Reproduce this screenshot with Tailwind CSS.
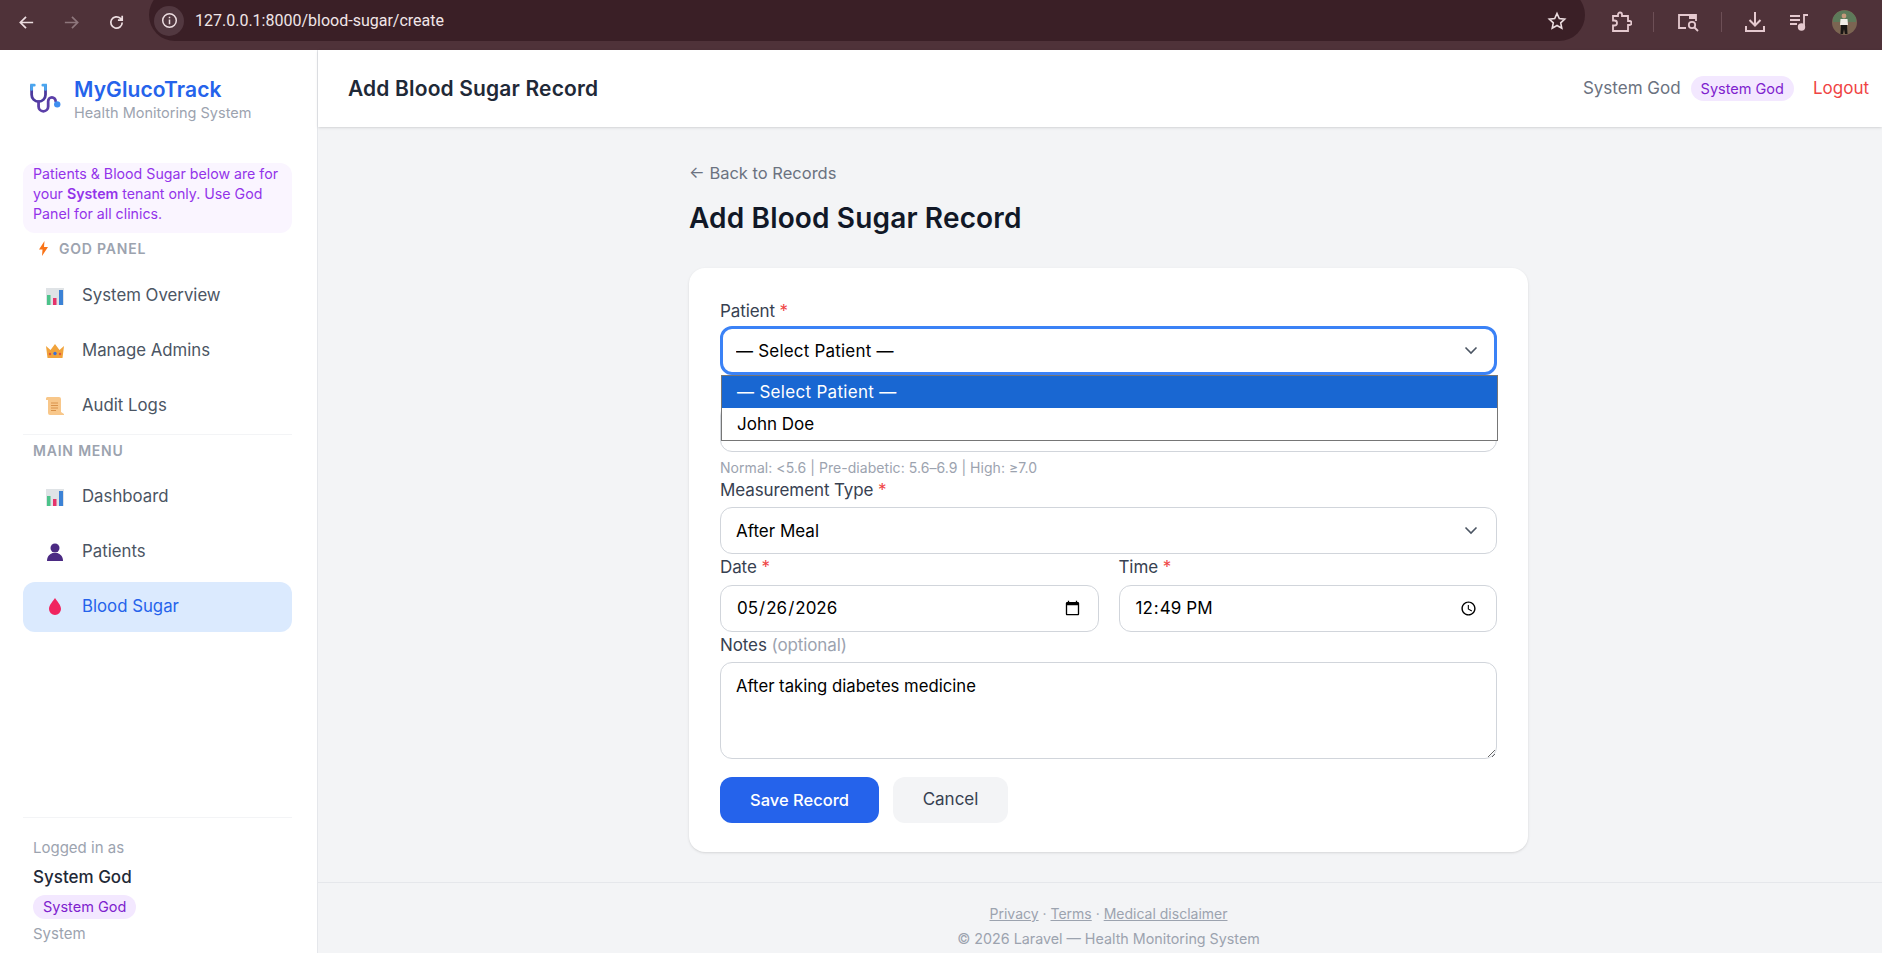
<!DOCTYPE html>
<html lang="en">
<head>
  <meta charset="UTF-8">
  <meta name="viewport" content="width=device-width, initial-scale=1.0">
  <title>Add Blood Sugar Record - MyGlucoTrack</title>
  <script src="https://cdn.jsdelivr.net/npm/@tailwindcss/browser@4"></script>
</head>
<body class="h-[953px] overflow-hidden bg-[#f3f4f6] font-[Inter,sans-serif] text-[#1f2937]">

  <!-- Browser chrome -->
  <div class="flex h-[50px] items-start overflow-hidden bg-[#4f3239] text-[#ecdde0]">
    <div class="flex h-[44px] w-[149px] shrink-0 items-center pl-[17px] gap-[26px]">
      <svg class="h-[19px] w-[19px]" viewBox="0 0 20 20" fill="none" stroke="currentColor" stroke-width="1.8"><path d="M17 10H3.500M9.500 4l-6 6 6 6"/></svg>
      <svg class="h-[19px] w-[19px] opacity-40" viewBox="0 0 20 20" fill="none" stroke="currentColor" stroke-width="1.8"><path d="M3 10h13.500M10.500 4l6 6-6 6"/></svg>
      <svg class="h-[19px] w-[19px]" viewBox="0 0 20 20" fill="none" stroke="currentColor" stroke-width="1.8"><path d="M16 10a6 6 0 1 1-1.800-4.300L16 7.500M16 3v4.500h-4.500"/></svg>
    </div>
    <div class="-mt-[11px] flex h-[52px] w-[1436px] shrink-0 items-center rounded-full bg-[#3a1f26] pt-[11px] pl-[5px]">
      <div class="flex h-[30px] w-[30px] items-center justify-center rounded-full bg-[#523840]">
        <svg class="h-[17px] w-[17px]" viewBox="0 0 18 18" fill="none" stroke="currentColor" stroke-width="1.6"><circle cx="9" cy="9" r="7.200"/><path d="M9 8v5M9 5v1.600"/></svg>
      </div>
      <span class="ml-[11px] font-[Roboto,sans-serif] text-[16px] text-[#f1e6e8]">127.0.0.1:8000/blood-sugar/create</span>
      <svg class="ml-auto mr-[18px] h-[20px] w-[20px]" viewBox="0 0 20 20" fill="none" stroke="currentColor" stroke-width="1.600"><path d="M10 2.500l2.300 5 5.400.6-4 3.700 1.100 5.400L10 14.500l-4.800 2.700 1.100-5.400-4-3.700 5.400-.6z"/></svg>
    </div>
    <div class="flex h-[44px] flex-1 items-center text-[#e5c9cf]">
      <svg class="ml-[25px] h-[22px] w-[22px]" viewBox="0 0 22 22" fill="none" stroke="currentColor" stroke-width="1.800"><path d="M3 5h5V3.500a2 2 0 0 1 4 0V5h6v5h1.500a1.800 1.800 0 0 1 0 4H18v6H3v-5.500h1.500a2.500 2.500 0 0 0 0-5H3z"/></svg>
      <span class="ml-[21px] h-[20px] w-px bg-[#6d4f56]"></span>
      <svg class="ml-[22px] h-[24px] w-[24px]" viewBox="0 0 24 24" fill="none" stroke="currentColor" stroke-width="1.800"><path d="M10 18H3V5h17v6"/><path d="M13 4h7v5h-7z" fill="currentColor" stroke="none"/><circle cx="16" cy="15" r="3.200"/><path d="M18.500 17.500L22 21"/></svg>
      <span class="ml-[21px] h-[20px] w-px bg-[#6d4f56]"></span>
      <svg class="ml-[21px] h-[24px] w-[24px]" viewBox="0 0 24 24" fill="none" stroke="currentColor" stroke-width="2"><path d="M12 2v13M6.500 10l5.500 5.500 5.500-5.500M3 16v5h18v-5"/></svg>
      <svg class="ml-[21px] h-[22px] w-[22px]" viewBox="0 0 22 22" fill="none" stroke="currentColor" stroke-width="1.800"><path d="M2 5h10M2 9h10M2 13h7M16 15V4h4"/><circle cx="13.500" cy="16" r="2.800" fill="currentColor"/></svg>
      <svg class="ml-[22px] h-[25px] w-[25px]" viewBox="0 0 25 25">
        <circle cx="12.500" cy="12.500" r="12.500" fill="#7b6552"/>
        <path d="M1 8a12.500 12.500 0 0 1 23 0v4H1z" fill="#5d7a5a"/>
        <circle cx="12" cy="6" r="2.400" fill="#c59a7c"/>
        <path d="M8.500 9h7l.5 6h-8z" fill="#f1eee8"/>
        <path d="M9 15h6l.5 9h-2.500l-1-5-1 5H8.500z" fill="#191614"/>
      </svg>
    </div>
  </div>

  <div class="flex h-[903px]">
    <!-- Sidebar -->
    <aside class="flex w-[318px] shrink-0 flex-col border-r border-[#e5e7eb] bg-white pl-[23px] pr-[25px]">
      <div class="flex h-[113px] shrink-0 items-start pl-[5px] pt-[26px]">
        <svg class="mt-[7px] h-[32px] w-[35px]" viewBox="0 0 32 30" fill="none" stroke-width="2.600" stroke-linecap="round">
          <path d="M3 2.500V11a6.500 6.500 0 0 0 13 0V2.500" stroke="#4c3a9e"/>
          <path d="M5.500 2H3v4M13.500 2H16v4" stroke="#4aa6ef"/>
          <path d="M9.500 17.500V22a4.500 4.500 0 0 0 9 0v-5a3.500 3.500 0 0 1 7 0" stroke="#5b3fa8"/>
          <circle cx="27" cy="20" r="3" fill="#3f8ef0" stroke="none"/>
        </svg>
        <div class="ml-[11px]">
          <div class="text-[21px] leading-[27px] font-semibold tracking-[0.1px] text-[#2563eb]">MyGlucoTrack</div>
          <div class="text-[14.500px] leading-[20px] text-[#9ca3af]">Health Monitoring System</div>
        </div>
      </div>

      <div class="h-[70px] shrink-0 rounded-xl bg-[#faf5ff] px-[10px] pt-[1px] text-[14.200px] leading-[20px] text-[#9333ea]">
        Patients &amp; Blood Sugar below are for your <b class="font-semibold">System</b> tenant only. Use God Panel for all clinics.
      </div>

      <div class="flex h-[30px] shrink-0 items-center pl-[16px] text-[14px] font-semibold tracking-[0.8px] text-[#9ca3af]">
        <svg class="mr-[11px] h-[15px] w-[9px]" viewBox="0 0 9 15"><path d="M5.500 0L0 8.500h3.500L3 15l6-9H5z" fill="#f97316"/></svg>
        GOD PANEL
      </div>

      <nav class="mt-[8px] flex flex-col gap-[5px] text-[16.800px] text-[#4b5563]">
        <a class="flex h-[50px] items-center rounded-xl pl-[23px]">
          <svg class="mr-[18px] h-[17px] w-[18px]" viewBox="0 0 18 17"><rect width="18" height="17" fill="#dfe3e6"/><rect x="1" y="7" width="3.500" height="10" fill="#4cc38a"/><rect x="7" y="10" width="3.500" height="7" fill="#e6336b"/><rect x="13" y="2" width="4" height="15" fill="#3b82d6"/></svg>
          System Overview
        </a>
        <a class="flex h-[50px] items-center rounded-xl pl-[23px]">
          <svg class="mr-[18px] h-[14px] w-[18px]" viewBox="0 0 18 14"><path d="M0 2l4.500 4L9 0l4.500 6L18 2l-1.500 12h-15z" fill="#f1a33b"/><circle cx="9" cy="9.500" r="1.700" fill="#3b6fd6"/><circle cx="4" cy="10" r="1.200" fill="#e0563f"/><circle cx="14" cy="10" r="1.200" fill="#e0563f"/></svg>
          Manage Admins
        </a>
        <a class="flex h-[50px] items-center rounded-xl pl-[23px]">
          <svg class="mr-[18px] h-[18px] w-[18px]" viewBox="0 0 18 18"><path d="M1 0h12a2 2 0 0 1 2 2v13l3 2v1H4a2 2 0 0 1-2-2V3H0V1z" fill="#f8c78a"/><path d="M5 6h7M5 8.500h7M5 11h7M5 13.500h5" stroke="#d9924a" stroke-width="1"/></svg>
          Audit Logs
        </a>
      </nav>

      <div class="mt-[3px] flex h-[33px] shrink-0 items-end border-t border-[#f3f4f6] pl-[10px] text-[14px] leading-[32px] font-semibold tracking-[0.8px] text-[#9ca3af]">MAIN MENU</div>

      <nav class="mt-[5px] flex flex-col gap-[5px] text-[16.800px] text-[#4b5563]">
        <a class="flex h-[50px] items-center rounded-xl pl-[23px]">
          <svg class="mr-[18px] h-[17px] w-[18px]" viewBox="0 0 18 17"><rect width="18" height="17" fill="#dfe3e6"/><rect x="1" y="7" width="3.500" height="10" fill="#4cc38a"/><rect x="7" y="10" width="3.500" height="7" fill="#e6336b"/><rect x="13" y="2" width="4" height="15" fill="#3b82d6"/></svg>
          Dashboard
        </a>
        <a class="flex h-[50px] items-center rounded-xl pl-[23px]">
          <svg class="mr-[18px] h-[18px] w-[18px]" viewBox="0 0 18 18"><circle cx="9" cy="5" r="4.500" fill="#4b2a83"/><path d="M1 18c0-5 3-7 5.500-8h5c2.500 1 5.500 3 5.500 8z" fill="#4b2a83"/></svg>
          Patients
        </a>
        <a class="flex h-[50px] items-center rounded-xl bg-[#dbeafe] pl-[23px] text-[#2563eb]">
          <svg class="mr-[18px] h-[18px] w-[18px]" viewBox="0 0 18 18"><path d="M9 0c2 3.500 6 6.500 6 11a6 6 0 0 1-12 0C3 6.500 7 3.500 9 0z" fill="#f0245f"/></svg>
          Blood Sugar
        </a>
      </nav>

      <div class="mt-auto h-[136px] shrink-0 border-t border-[#f3f4f6] pl-[10px] pt-[20px]">
        <div class="text-[15px] leading-[20px] text-[#9ca3af]">Logged in as</div>
        <div class="mt-[8px] text-[17px] leading-[22px] font-medium text-[#1f2937]">System God</div>
        <span class="mt-[7px] inline-block rounded-full bg-[#f3e8ff] px-[10px] text-[14.500px] leading-[24px] text-[#7e22ce]">System God</span>
        <div class="mt-[5px] text-[15px] leading-[20px] text-[#9ca3af]">System</div>
      </div>
    </aside>

    <!-- Main -->
    <div class="flex min-w-0 flex-1 flex-col">
      <header class="flex h-[77px] shrink-0 items-center bg-white pl-[30px] pr-[13px] shadow-sm">
        <h1 class="text-[21px] font-semibold tracking-[0.15px] text-[#1f2937]">Add Blood Sugar Record</h1>
        <span class="ml-auto text-[17px] text-[#6b7280]">System God</span>
        <span class="ml-[10px] rounded-full bg-[#f3e8ff] px-[10px] text-[14.500px] leading-[25px] text-[#7e22ce]">System God</span>
        <a class="ml-[19px] text-[17px] text-[#ef4444]">Logout</a>
      </header>

      <main class="ml-[17px] w-[839px] self-center pt-[36px]">
        <a class="block text-[16.500px] leading-[20px] text-[#6b7280]">← Back to Records</a>
        <h2 class="mt-[15px] text-[28px] leading-[40px] font-semibold tracking-[0.15px] text-[#111827]">Add Blood Sugar Record</h2>

        <form class="mt-[30px] h-[584px] rounded-2xl bg-white px-[31px] pt-[31px] shadow-sm">
          <label class="block text-[17px] leading-[24px] tracking-[-0.1px] text-[#374151]">Patient <span class="text-[#ef4444]">*</span></label>
          <div class="relative mt-[3px]">
            <select class="block h-[49px] w-full appearance-none rounded-xl border-[3px] border-[#3b82f6] bg-white pl-[13px] pt-[3px] text-[17px] tracking-[0.2px] text-black">
              <option>— Select Patient —</option>
              <option>John Doe</option>
            </select>
            <svg class="absolute right-[19px] top-[17px] h-[14px] w-[14px] text-[#4b5563]" viewBox="0 0 14 14" fill="none" stroke="currentColor" stroke-width="1.600"><path d="M1.500 4.500L7 10l5.500-5.500"/></svg>
            <!-- open dropdown list -->
            <div class="absolute left-[1px] top-[49px] z-10 w-[777px] border border-[#767676] bg-white text-[17px] text-black">
              <div class="h-[32px] bg-[#1967d2] pl-[15px] leading-[32px] tracking-[0.3px] text-white">— Select Patient —</div>
              <div class="h-[32px] pl-[15px] leading-[32px]">John Doe</div>
            </div>
          </div>

          <!-- covered by the open list -->
          <input type="text" class="mt-[29px] block h-[48px] w-full rounded-xl border border-[#d1d5db] bg-white">
          <p class="mt-[6px] text-[14px] leading-[20px] tracking-[0.05px] text-[#9ca3af]">Normal: &lt;5.6 | Pre-diabetic: 5.6–6.9 | High: ≥7.0</p>

          <label class="block text-[17px] leading-[24px] tracking-[-0.1px] text-[#374151]">Measurement Type <span class="text-[#ef4444]">*</span></label>
          <div class="relative mt-[5px]">
            <select class="block h-[47px] w-full appearance-none rounded-xl border border-[#d1d5db] bg-white pl-[15px] pt-[2px] text-[17px] text-black">
              <option>After Meal</option>
            </select>
            <svg class="absolute right-[19px] top-[16px] h-[14px] w-[14px] text-[#4b5563]" viewBox="0 0 14 14" fill="none" stroke="currentColor" stroke-width="1.600"><path d="M1.500 4.500L7 10l5.500-5.500"/></svg>
          </div>

          <div class="mt-[1px] grid grid-cols-2 gap-x-[20px]">
            <div>
              <label class="block text-[17px] leading-[24px] tracking-[-0.1px] text-[#374151]">Date <span class="text-[#ef4444]">*</span></label>
              <input type="date" value="2026-05-26" class="mt-[6px] block h-[47px] w-full rounded-xl border border-[#d1d5db] bg-white px-[15px] text-[17px] text-black">
            </div>
            <div>
              <label class="block text-[17px] leading-[24px] tracking-[-0.1px] text-[#374151]">Time <span class="text-[#ef4444]">*</span></label>
              <input type="time" value="12:49" class="mt-[6px] block h-[47px] w-full rounded-xl border border-[#d1d5db] bg-white px-[15px] text-[17px] text-black">
            </div>
          </div>

          <label class="mt-[1px] block text-[17px] leading-[24px] tracking-[-0.1px] text-[#374151]">Notes <span class="text-[#9ca3af]">(optional)</span></label>
          <textarea class="mt-[5px] block h-[97px] w-full rounded-xl border border-[#d1d5db] bg-white px-[15px] py-[11px] text-[16.700px] text-black">After taking diabetes medicine</textarea>

          <div class="mt-[18px] flex gap-[14px]">
            <button type="button" class="h-[46px] w-[159px] rounded-xl bg-[#2563eb] text-[16.500px] font-medium text-white">Save Record</button>
            <button type="button" class="h-[46px] w-[115px] rounded-xl bg-[#f3f4f6] text-[17px] text-[#374151]">Cancel</button>
          </div>
        </form>
      </main>

      <footer class="mt-[30px] border-t border-[#e5e7eb] pl-[17px] pt-[18px] text-center text-[14px] leading-[25px] text-[#9ca3af]">
        <div><a class="underline">Privacy</a> · <a class="underline">Terms</a> · <a class="underline">Medical disclaimer</a></div>
        <div class="text-[14.300px]">© 2026 Laravel — Health Monitoring System</div>
      </footer>
    </div>
  </div>
</body>
</html>
